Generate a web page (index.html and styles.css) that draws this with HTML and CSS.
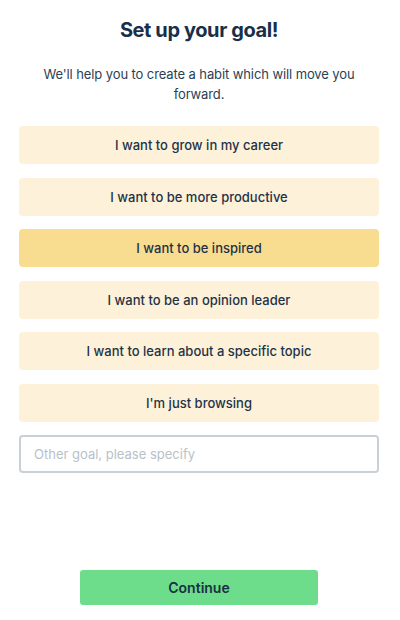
FILE: index.html
```html
<!DOCTYPE html>
<html lang="en">
<head>
<meta charset="utf-8">
<title>Set up your goal</title>
<link rel="stylesheet" href="styles.css">
</head>
<body>
<main class="page">
  <h1 class="title">Set up your goal!</h1>
  <p class="subtitle">We'll help you to create a habit which will move you forward.</p>
  <div class="options">
    <button class="option">I want to grow in my career</button>
    <button class="option">I want to be more productive</button>
    <button class="option selected">I want to be inspired</button>
    <button class="option">I want to be an opinion leader</button>
    <button class="option">I want to learn about a specific topic</button>
    <button class="option">I'm just browsing</button>
    <input class="other" type="text" placeholder="Other goal, please specify">
  </div>
  <div class="actions">
    <button class="continue">Continue</button>
  </div>
</main>
</body>
</html>
```

FILE: styles.css
```css
html, body {
  margin: 0;
  padding: 0;
  background: #ffffff;
}
body {
  font-family: "Inter", "Liberation Sans", sans-serif;
  color: #1d3149;
}
.page {
  width: 400px;
  height: 620px;
  box-sizing: border-box;
  padding: 18px 21px 0 19px;
  display: flex;
  flex-direction: column;
}
.title {
  margin: 0;
  text-align: center;
  font-size: 20px;
  font-weight: 700;
  line-height: 24px;
  letter-spacing: -0.4px;
  color: #17304a;
}
.subtitle {
  margin: 22px 0 0 0;
  text-align: center;
  font-size: 13px;
  line-height: 20px;
  letter-spacing: -0.1px;
  color: #2b3f55;
}
.options {
  margin-top: 22px;
  display: flex;
  flex-direction: column;
  gap: 13.5px;
}
.option {
  height: 38px;
  border: none;
  border-radius: 4px;
  background: #fdf2d9;
  font-family: inherit;
  font-size: 13px;
  font-weight: 500;
  color: #1f3248;
  padding: 0;
}
.option.selected {
  background: #f8dc90;
}
.other {
  height: 38px;
  box-sizing: border-box;
  border: 2px solid #c9d1d8;
  border-radius: 4px;
  padding: 0 13px;
  font-family: inherit;
  font-size: 13px;
  color: #1f3248;
  background: #fff;
}
.other::placeholder {
  color: #b9c1c9;
}
.actions {
  margin-top: 97px;
  display: flex;
  justify-content: center;
}
.continue {
  width: 238px;
  height: 35px;
  border: none;
  border-radius: 3px;
  background: #6ddc8b;
  font-family: inherit;
  font-size: 14px;
  font-weight: 600;
  color: #1a2f45;
}
```
